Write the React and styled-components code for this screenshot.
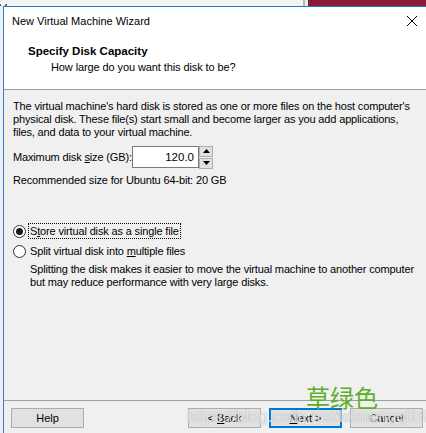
import React from "react";
import styled, { createGlobalStyle } from "styled-components";

const Global = createGlobalStyle`
  html, body { margin: 0; padding: 0; }
  body {
    width: 426px; height: 433px; overflow: hidden;
    background: #f0f0f0;
    font-family: Tahoma, "Liberation Sans", Arial, sans-serif;
  }
`;

const Page = styled.div`
  width: 426px;
  height: 433px;
  display: flex;
  flex-direction: column;
  position: relative;
  overflow: hidden;
`;

const Backdrop = styled.div`
  height: 6px;
  display: flex;
  flex: none;
`;

const BackPane = styled.div`
  width: ${(p) => (p.$w ? `${p.$w}px` : "auto")};
  flex: ${(p) => (p.$w ? "none" : "1")};
  background: ${(p) => p.$bg};
  position: relative;
  overflow: hidden;
`;

const PeekGlyph = styled.span`
  position: absolute;
  left: -1px;
  top: 2px;
  font: 12px "Liberation Sans", sans-serif;
  color: #000;
`;

const Dialog = styled.div`
  flex: 1;
  margin-left: 3px;
  border-left: 1px solid #2f7fcf;
  border-top: 1px solid #1a7ad6;
  display: flex;
  flex-direction: column;
  background: #f0f0f0;
`;

const Header = styled.div`
  background: #fff;
  border-bottom: 1px solid #a0a0a0;
  height: 82px;
  display: flex;
  flex-direction: column;
  flex: none;
`;

const TitleBar = styled.div`
  height: 28px;
  display: flex;
  align-items: center;
  justify-content: space-between;
  padding: 0 6px 0 8px;
`;

const Title = styled.span`
  font: 11px "Liberation Sans", Arial, sans-serif;
  color: #000;
`;

const CloseIcon = styled.svg`
  width: 12px;
  height: 12px;
  margin-right: 2px;
`;

const Heading = styled.div`
  padding: 8px 0 0 24px;
  font: bold 11.5px Tahoma, "Liberation Sans", Arial, sans-serif;
  line-height: 16px;
  color: #000;
  white-space: nowrap;
`;

const SubHeading = styled.div`
  padding-left: 23px;
  font-weight: normal;
  font-size: 11px;
  letter-spacing: -0.1px;
`;

const Body = styled.div`
  flex: 1;
  padding: 10px 9px 0 9px;
  font-size: 11px;
  letter-spacing: -0.15px;
  line-height: 13px;
  color: #000;
  display: flex;
  flex-direction: column;
  white-space: nowrap;
`;

const Para = styled.p`
  margin: 0;
  padding-left: ${(p) => p.$indent || 0}px;
  margin-top: ${(p) => p.$mt || 0}px;
`;

const SizeRow = styled.div`
  display: flex;
  align-items: center;
  margin-top: 7px;
  height: 22px;
`;

const SizeLabel = styled.span`
  width: 119px;
  flex: none;
`;

const NumberBox = styled.div`
  width: 61px;
  height: 20px;
  border: 1px solid #7a7a7a;
  background: #fff;
  display: flex;
  align-items: center;
  justify-content: flex-end;
  padding-right: 4px;
  box-sizing: content-box;
  font-size: 11.5px;
  letter-spacing: 0;
`;

const Spin = styled.div`
  display: flex;
  flex-direction: column;
  gap: 1px;
`;

const SpinButton = styled.div`
  width: 12px;
  height: 9px;
  border: 1px solid #adadad;
  background: #e1e1e1;
  display: flex;
  align-items: center;
  justify-content: center;
`;

const RadioRow = styled.label`
  display: flex;
  align-items: center;
  height: 16px;
  margin-top: ${(p) => p.$mt}px;
`;

const RadioCircle = styled.span`
  width: 11px;
  height: 11px;
  border: 1px solid #333;
  border-radius: 50%;
  background: #fff;
  display: flex;
  align-items: center;
  justify-content: center;
  flex: none;
  &::after {
    content: "";
    width: 7px;
    height: 7px;
    border-radius: 50%;
    background: ${(p) => (p.$on ? "#1a1a1a" : "transparent")};
  }
`;

const RadioText = styled.span`
  margin-left: 2px;
  padding: 1px;
  border: 1px dotted ${(p) => (p.$focus ? "#000" : "transparent")};
  line-height: 12px;
`;

const U = styled.span`
  text-decoration: underline;
  text-underline-offset: 1px;
`;

const Footer = styled.div`
  height: 25px;
  border-top: 1px solid #a0a0a0;
  padding: 7px 3px 0 7px;
  display: flex;
  align-items: flex-start;
  gap: 8px;
  flex: none;
`;

const Button = styled.button`
  width: 73px;
  height: 20px;
  box-sizing: border-box;
  border: ${(p) => (p.$default ? "2px solid #0078d7" : "1px solid #adadad")};
  background: #e1e1e1;
  font: 11px Tahoma, "Liberation Sans", Arial, sans-serif;
  color: #000;
  padding: 0;
  margin-left: ${(p) => (p.$push ? "auto" : "0")};
`;

const GreenMark = styled.div`
  position: absolute;
  left: 306px;
  top: 382px;
  font: 24px "Noto Sans CJK SC", sans-serif;
  line-height: 30px;
  color: #5fae2a;
`;

const UrlMark = styled.div`
  position: absolute;
  left: 187px;
  top: 408px;
  font: 16px "Liberation Sans", Arial, sans-serif;
  color: rgba(255, 255, 255, 0.75);
  text-shadow: 0 0 1px rgba(110, 110, 110, 0.7);
  letter-spacing: 0.2px;
  white-space: nowrap;
  pointer-events: none;
`;

const Arrow = ({ up }) => (
  <svg width="7" height="4" viewBox="0 0 7 4">
    <polygon points={up ? "3.5,0 7,4 0,4" : "0,0 7,0 3.5,4"} fill="#000" />
  </svg>
);

export default function App() {
  return (
    <>
      <Global />
      <Page>
        <Backdrop>
          <BackPane $w={303} $bg="#f4f4f4">
            <PeekGlyph>V</PeekGlyph>
          </BackPane>
          <BackPane $w={2} $bg="#b8b8b8" />
          <BackPane $w={3} $bg="#ececec" />
          <BackPane $bg="#8b1838" />
        </Backdrop>
        <Dialog>
          <Header>
            <TitleBar>
              <Title>New Virtual Machine Wizard</Title>
              <CloseIcon viewBox="0 0 12 12">
                <path d="M1 1 L11 11 M11 1 L1 11" stroke="#000" strokeWidth="1" />
              </CloseIcon>
            </TitleBar>
            <Heading>
              Specify Disk Capacity
              <SubHeading>How large do you want this disk to be?</SubHeading>
            </Heading>
          </Header>
          <Body>
            <Para>
              The virtual machine's hard disk is stored as one or more files on the host computer's
              <br />
              physical disk. These file(s) start small and become larger as you add applications,
              <br />
              files, and data to your virtual machine.
            </Para>
            <SizeRow>
              <SizeLabel>
                Maximum disk <U>s</U>ize (GB):
              </SizeLabel>
              <NumberBox>120.0</NumberBox>
              <Spin>
                <SpinButton>
                  <Arrow up />
                </SpinButton>
                <SpinButton>
                  <Arrow />
                </SpinButton>
              </Spin>
            </SizeRow>
            <Para $mt={6}>Recommended size for Ubuntu 64-bit: 20 GB</Para>
            <RadioRow $mt={36}>
              <RadioCircle $on />
              <RadioText $focus>
                S<U>t</U>ore virtual disk as a single file
              </RadioText>
            </RadioRow>
            <RadioRow $mt={4}>
              <RadioCircle />
              <RadioText>
                Split virtual disk into <U>m</U>ultiple files
              </RadioText>
            </RadioRow>
            <Para $indent={17} $mt={4}>
              Splitting the disk makes it easier to move the virtual machine to another computer
              <br />
              but may reduce performance with very large disks.
            </Para>
          </Body>
          <Footer>
            <Button>Help</Button>
            <Button $push>
              &lt; <U>B</U>ack
            </Button>
            <Button $default>
              <U>N</U>ext &gt;
            </Button>
            <Button>Cancel</Button>
          </Footer>
        </Dialog>
        <GreenMark>草绿色</GreenMark>
        <UrlMark>https://blog.csdn.net/leimengql16</UrlMark>
      </Page>
    </>
  );
}
